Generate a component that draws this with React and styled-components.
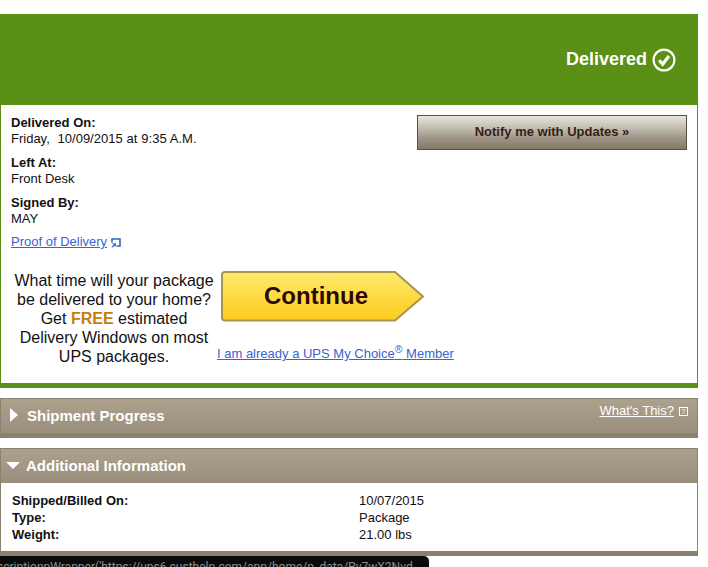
import React from "react";
import styled, { createGlobalStyle } from "styled-components";

const GlobalStyle = createGlobalStyle`
  html, body {
    margin: 0;
    padding: 0;
    background: #fff;
    height: 100%;
    overflow: hidden;
  }
  body {
    font-family: "Liberation Sans", Arial, sans-serif;
    font-size: 13px;
    color: #111;
  }
`;

const Page = styled.div`
  width: 708px;
  height: 567px;
  position: relative;
  overflow: hidden;
  padding-top: 14px;
  box-sizing: border-box;
`;

const Column = styled.div`
  width: 698px;
  display: flex;
  flex-direction: column;
`;

const StatusBanner = styled.div`
  height: 91px;
  background: #5a9015;
  display: flex;
  align-items: center;
  justify-content: flex-end;
  gap: 5px;
  padding: 0 22px 0 0;
  box-sizing: border-box;
  color: #fff;
  font-size: 18px;
  font-weight: bold;
`;

const StatusBody = styled.div`
  height: 283px;
  box-sizing: border-box;
  border-left: 1px solid #5a9015;
  border-right: 1px solid #5a9015;
  border-bottom: 5px solid #5a9015;
  display: flex;
  flex-direction: column;
`;

const TopRow = styled.div`
  display: flex;
  justify-content: space-between;
  padding: 10px 10px 0 10px;
  height: 152px;
  box-sizing: border-box;
`;

const Facts = styled.div`
  display: flex;
  flex-direction: column;
  gap: 8px;
`;

const Fact = styled.div`
  line-height: 16px;
`;

const Label = styled.div`
  font-weight: bold;
`;

const Value = styled.div``;

const DateValue = styled.div`
  word-spacing: 0.3px;
`;

const ProofRow = styled.div`
  line-height: 15px;
  margin-top: -1px;
`;

const TextLink = styled.a`
  color: #3c62cf;
  text-decoration: underline;
  font-size: 13px;
`;

const NotifyButton = styled.button`
  width: 270px;
  height: 35px;
  border: 1px solid #5c4f3c;
  background: linear-gradient(#e6e4dc 0%, #c9c5bb 30%, #9b9183 70%, #857868 100%);
  font-family: inherit;
  font-size: 13px;
  font-weight: bold;
  color: #3a1c14;
  padding: 0 0 2px;
`;

const Promo = styled.div`
  display: flex;
  padding-left: 10px;
`;

const PromoText = styled.div`
  width: 206px;
  font-size: 16px;
  line-height: 19px;
  text-align: center;
  color: #111;
  padding-top: 14px;
`;

const Free = styled.span`
  font-weight: bold;
  color: #c47d0e;
`;

const PromoActions = styled.div`
  display: flex;
  flex-direction: column;
  align-items: flex-start;
  padding-top: 14px;
`;

const ContinueButton = styled.button`
  position: relative;
  width: 204px;
  height: 51px;
  margin-left: 4px;
  border: 0;
  background: none;
  padding: 0 14px 1px 0;
  font-family: inherit;
  font-size: 24px;
  font-weight: bold;
  color: #2d0a00;
`;

const ContinueShape = styled.svg`
  position: absolute;
  left: 0;
  top: 0;
`;

const ContinueLabel = styled.span`
  position: relative;
`;

const MemberLink = styled(TextLink)`
  margin-top: 24px;
  line-height: 15px;
`;

const Sup = styled.sup`
  font-size: 10.5px;
  line-height: 0;
`;

const Section = styled.div`
  margin-top: 10px;
  box-sizing: border-box;
  border: 1px solid #8c806e;
  border-width: 1px 1px 0 1px;
`;

const SectionHeader = styled.div`
  height: 34px;
  background: linear-gradient(#aca18d, #9a8f7c);
  display: flex;
  align-items: center;
  justify-content: space-between;
  color: #fff;
  font-size: 15px;
  font-weight: bold;
  padding-bottom: 2px;
  box-sizing: border-box;
`;

const HeaderTitle = styled.div`
  display: flex;
  align-items: center;
  padding-left: ${(p) => p.$pad}px;
  gap: ${(p) => p.$gap}px;
`;

const ArrowRight = styled.span`
  width: 0;
  height: 0;
  border-left: 8px solid #fff;
  border-top: 7px solid transparent;
  border-bottom: 7px solid transparent;
`;

const ArrowDown = styled.span`
  width: 0;
  height: 0;
  border-top: 7px solid #fff;
  border-left: 7px solid transparent;
  border-right: 7px solid transparent;
`;

const WhatsThis = styled.div`
  align-self: flex-start;
  display: flex;
  align-items: center;
  gap: 5px;
  margin: 4px 9px 0 0;
  font-size: 13px;
  font-weight: normal;
`;

const WhatsLink = styled.a`
  color: #fff;
  text-decoration: underline;
`;

const HelpBox = styled.span`
  width: 9px;
  height: 9px;
  box-sizing: border-box;
  border: 1px solid #fff;
  font-size: 7px;
  line-height: 7px;
  text-align: center;
  color: #fff;
  margin-top: 2px;
`;

const SectionFoot = styled.div`
  height: 5px;
  background: #8c806e;
  margin: 0 -1px;
`;

const InfoGrid = styled.div`
  height: 68px;
  box-sizing: border-box;
  padding: 9px 10px 0 11px;
  display: grid;
  grid-template-columns: 347px 1fr;
  grid-auto-rows: 17px;
  align-items: center;
  background: #fff;
`;

const InfoLabel = styled.div`
  font-weight: bold;
`;

const InfoValue = styled.div``;

const Tooltip = styled.div`
  position: absolute;
  left: 0;
  top: 556px;
  width: 429px;
  height: 16px;
  background: #0a0a0a;
  border-top-right-radius: 5px;
  color: #8d8d8d;
  font-family: Roboto, sans-serif;
  font-size: 12px;
  line-height: 16px;
  white-space: nowrap;
  overflow: hidden;
  text-indent: -3px;
  padding-top: 3px;
`;

function CheckCircle() {
  return (
    <svg width="24" height="24" viewBox="0 0 24 24" fill="none" stroke="#fff">
      <circle cx="12" cy="12" r="10.4" strokeWidth="2.2" />
      <path d="M7.2 12.3l3.5 3.9 6.2-8.2" strokeWidth="3.2" />
    </svg>
  );
}

function ExternalIcon() {
  return (
    <svg width="10" height="10" viewBox="0 0 10 10" fill="none" stroke="#2f66c8" style={{ marginLeft: 4, verticalAlign: -2 }}>
      <path d="M1 4.5V1H9V8H5.5" strokeWidth="1.6" />
      <path d="M0.8 9.4L3.8 6.4M1.5 5.8H4.3V8.5" strokeWidth="1.1" />
    </svg>
  );
}

export default function App() {
  return (
    <>
      <GlobalStyle />
      <Page>
        <Column>
          <StatusBanner>
            Delivered <CheckCircle />
          </StatusBanner>
          <StatusBody>
            <TopRow>
              <Facts>
                <Fact>
                  <Label>Delivered On:</Label>
                  <DateValue>Friday,&nbsp; 10/09/2015 at 9:35 A.M.</DateValue>
                </Fact>
                <Fact>
                  <Label>Left At:</Label>
                  <Value>Front Desk</Value>
                </Fact>
                <Fact>
                  <Label>Signed By:</Label>
                  <Value>MAY</Value>
                </Fact>
                <ProofRow>
                  <TextLink href="#">Proof of Delivery</TextLink>
                  <ExternalIcon />
                </ProofRow>
              </Facts>
              <NotifyButton>Notify me with Updates »</NotifyButton>
            </TopRow>
            <Promo>
              <PromoText>
                What time will your package be delivered to your home? Get <Free>FREE</Free> estimated Delivery Windows on most UPS packages.
              </PromoText>
              <PromoActions>
                <ContinueButton>
                  <ContinueShape width="204" height="51" viewBox="0 0 204 51">
                    <defs>
                      <linearGradient id="gold" x1="0" y1="0" x2="0" y2="1">
                        <stop offset="0" stopColor="#ffe96e" />
                        <stop offset="1" stopColor="#fdcb1c" />
                      </linearGradient>
                    </defs>
                    <path
                      d="M4 1H174L202 25.5L174 49.5H4Q1 49.5 1 46.5V4Q1 1 4 1Z"
                      fill="url(#gold)"
                      stroke="#a69550"
                      strokeWidth="2"
                    />
                  </ContinueShape>
                  <ContinueLabel>Continue</ContinueLabel>
                </ContinueButton>
                <MemberLink href="#">
                  I am already a UPS My Choice<Sup>®</Sup> Member
                </MemberLink>
              </PromoActions>
            </Promo>
          </StatusBody>
          <Section>
            <SectionHeader>
              <HeaderTitle $pad={9} $gap={9}>
                <ArrowRight />
                Shipment Progress
              </HeaderTitle>
              <WhatsThis>
                <WhatsLink href="#">What's This?</WhatsLink>
                <HelpBox>?</HelpBox>
              </WhatsThis>
            </SectionHeader>
            <SectionFoot />
          </Section>
          <Section>
            <SectionHeader>
              <HeaderTitle $pad={5} $gap={6}>
                <ArrowDown />
                Additional Information
              </HeaderTitle>
            </SectionHeader>
            <InfoGrid>
              <InfoLabel>Shipped/Billed On:</InfoLabel>
              <InfoValue>10/07/2015</InfoValue>
              <InfoLabel>Type:</InfoLabel>
              <InfoValue>Package</InfoValue>
              <InfoLabel>Weight:</InfoLabel>
              <InfoValue>21.00 lbs</InfoValue>
            </InfoGrid>
            <SectionFoot />
          </Section>
        </Column>
        <Tooltip>scriptionpWrapper('https://ups6.custhelp.com/app/home/p_data/Pv7wX2Nvd</Tooltip>
      </Page>
    </>
  );
}
